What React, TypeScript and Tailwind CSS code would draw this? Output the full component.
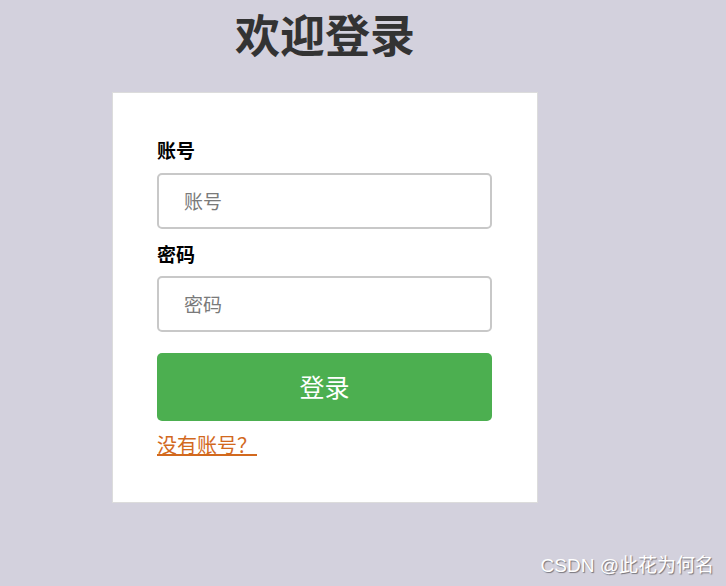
import React from "react";

export default function App() {
  const font = { fontFamily: '"Noto Sans CJK SC", "Microsoft YaHei", sans-serif' };
  return (
    <div className="relative min-h-[586px] w-full bg-[#d3d1dd]" style={font}>
      <div className="ml-[112px] w-[426px] pt-[11px]">
        <h1 className="text-center text-[45px] font-bold leading-[45px] text-[#333333]">欢迎登录</h1>
        <div className="mt-[36px] h-[411px] border border-[#dcdcdc] bg-white px-[44px] pt-[45px]">
          <div className="text-[19px] font-bold leading-[24px] text-black">账号</div>
          <div className="mt-[11px] flex h-[56px] w-[335px] items-center rounded-[5px] border-2 border-[#c8c8c8] pl-[25px] text-[19px] text-[#7a7a7a]">
            账号
          </div>
          <div className="mt-[13px] text-[19px] font-bold leading-[24px] text-black">密码</div>
          <div className="mt-[10px] flex h-[56px] w-[335px] items-center rounded-[5px] border-2 border-[#c8c8c8] pl-[25px] text-[19px] text-[#7a7a7a]">
            密码
          </div>
          <div className="mt-[21px] flex h-[68px] w-[335px] items-center justify-center rounded-[5px] bg-[#4caf50] text-[25px] text-white">
            登录
          </div>
          <div className="mt-[10px] inline-block text-[20px] leading-[28px] text-[#d2691e] underline">没有账号？</div>
        </div>
      </div>
      <div
        className="absolute bottom-[6px] right-[12px] text-[19px] text-white [text-shadow:1px_1px_1px_rgba(0,0,0,0.45)]"
        style={{ fontFamily: '"Liberation Sans", "Noto Sans CJK SC", sans-serif' }}
      >
        CSDN @此花为何名
      </div>
    </div>
  );
}
